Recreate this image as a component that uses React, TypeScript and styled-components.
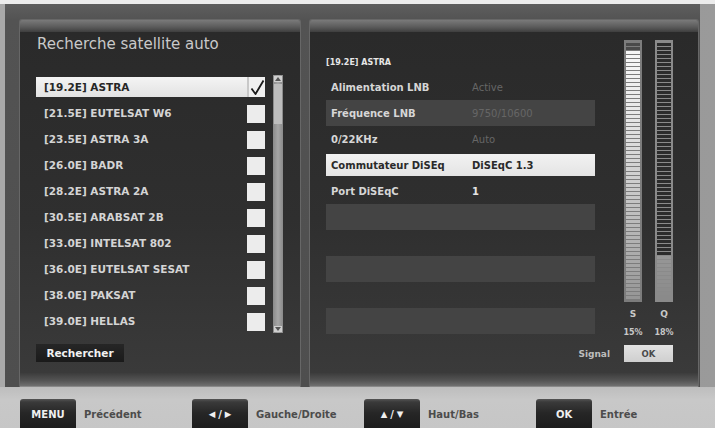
import React from "react";
import styled, { createGlobalStyle } from "styled-components";

const GlobalStyle = createGlobalStyle`
  html, body { margin: 0; padding: 0; background: #c4c4c4; }
  body { font-family: "DejaVu Sans", "Liberation Sans", sans-serif; }
  * { box-sizing: border-box; }
`;

const Screen = styled.div`
  width: 715px;
  height: 428px;
  overflow: hidden;
  display: flex;
  flex-direction: column;
  background: #c4c4c4;
`;

const TopStrip = styled.div`
  height: 4px;
  background: #ececec;
  flex: none;
`;

const Upper = styled.div`
  height: 383px;
  display: flex;
  background: linear-gradient(90deg, #a9a9a9 0px, #a9a9a9 5px, transparent 5px),
    linear-gradient(90deg, #8d8d8d, #9a9a9a);
  padding-left: 5px;
  flex: none;
`;

const Frame = styled.div`
  width: 695px;
  height: 100%;
  background: linear-gradient(180deg, #5e5e5e 0px, #535353 16px, #4e4e4e 100%);
  padding: 16px 2px 0 15px;
  display: flex;
  gap: 10px;
`;

const Panel = styled.div<{ $w: number }>`
  width: ${(p) => p.$w}px;
  height: 100%;
  display: flex;
  flex-direction: column;
  border-radius: 2px 2px 0 0;
  overflow: hidden;
  box-shadow: 0 0 0 1px #676767;
`;

const PanelTop = styled.div`
  height: 12px;
  flex: none;
  background: linear-gradient(180deg, #7a7a7a, #5a5a5a 60%, #3e3e3e);
`;

const PanelBody = styled.div`
  flex: 1;
  background: linear-gradient(180deg, #2a2a2a 0%, #2f2f2f 55%, #3a3a3a 100%);
  display: flex;
  flex-direction: column;
  padding-left: 16px;
`;

const PanelLip = styled.div`
  height: 14px;
  flex: none;
  background: linear-gradient(180deg, #3c3c3c, #555 60%, #707070);
  border-bottom: 1px solid #8a8a8a;
`;

const Title = styled.div`
  margin-top: 4px;
  height: 16px;
  line-height: 16px;
  font-size: 15px;
  color: #c9c9c9;
  padding-left: 1px;
`;

const ListArea = styled.div`
  margin-top: 22px;
  display: flex;
  gap: 8px;
  align-items: flex-start;
`;

const List = styled.div`
  width: 229px;
  display: flex;
  flex-direction: column;
`;

const ListRow = styled.div`
  height: 26px;
  padding: 3px 0;
  display: flex;
`;

const RowInner = styled.div<{ $sel?: boolean }>`
  flex: 1;
  display: flex;
  align-items: center;
  justify-content: space-between;
  background: ${(p) => (p.$sel ? "linear-gradient(180deg,#f4f4f4,#e2e2e2)" : "transparent")};
  padding-left: 8px;
`;

const ItemText = styled.span<{ $sel?: boolean }>`
  font-size: 10.5px;
  font-weight: bold;
  color: ${(p) => (p.$sel ? "#262626" : "#d4d4d4")};
  white-space: nowrap;
`;

const CheckBox = styled.div<{ $sel?: boolean }>`
  width: 18px;
  height: ${(p) => (p.$sel ? 20 : 18)}px;
  margin-top: ${(p) => (p.$sel ? 0 : 1)}px;
  background: ${(p) => (p.$sel ? "#f0f0f0" : "#ececec")};
  border-left: ${(p) => (p.$sel ? "2px solid #c8c8c8" : "none")};
  display: flex;
  align-items: center;
  justify-content: center;
`;

const ScrollTrack = styled.div`
  margin-top: 1px;
  width: 10px;
  height: 258px;
  background: linear-gradient(90deg, #8a8a8a, #a6a6a6 50%, #8a8a8a);
  display: flex;
  flex-direction: column;
  justify-content: space-between;
  align-items: center;
  padding: 1px 0;
`;

const ScrollCap = styled.div`
  width: 8px;
  height: 6px;
  background: #cfcfcf;
  display: flex;
  align-items: center;
  justify-content: center;
`;

const ScrollThumb = styled.div`
  width: 8px;
  height: 40px;
  background: #bdbdbd;
  margin-top: 2px;
`;

const ScrollSpacer = styled.div`
  flex: 1;
`;

const SearchButton = styled.div`
  margin-top: 10px;
  width: 88px;
  height: 18px;
  background: linear-gradient(180deg, #262626, #1a1a1a);
  color: #f2f2f2;
  font-size: 10.5px;
  font-weight: bold;
  display: flex;
  align-items: center;
  justify-content: center;
`;

const RightTop = styled.div`
  padding-top: 8px;
  padding-right: 25px;
  display: flex;
  justify-content: space-between;
  align-items: flex-start;
`;

const InfoColumn = styled.div`
  width: 269px;
  margin-top: 17px;
  display: flex;
  flex-direction: column;
`;

const InfoHeader = styled.div`
  height: 12px;
  line-height: 12px;
  font-size: 8px;
  font-weight: bold;
  color: #e6e6e6;
  margin-bottom: 5px;
`;

const InfoRow = styled.div<{ $tone: "dark" | "light" | "sel" }>`
  height: 26px;
  display: flex;
  align-items: center;
  padding-left: 5px;
  background: ${(p) =>
    p.$tone === "light"
      ? "#444444"
      : p.$tone === "sel"
      ? "linear-gradient(180deg, transparent 2px, #f2f2f2 2px, #e4e4e4 24px, transparent 24px)"
      : "transparent"};
`;

const InfoLabel = styled.span<{ $sel?: boolean }>`
  width: 141px;
  font-size: 10px;
  font-weight: bold;
  color: ${(p) => (p.$sel ? "#2a2a2a" : "#d6d6d6")};
  white-space: nowrap;
`;

const InfoValue = styled.span<{ $kind: "dim" | "on" | "sel" }>`
  font-size: 10px;
  font-weight: ${(p) => (p.$kind === "dim" ? "normal" : "bold")};
  color: ${(p) => (p.$kind === "dim" ? "#666666" : p.$kind === "sel" ? "#2a2a2a" : "#e4e4e4")};
  white-space: nowrap;
`;

const MeterColumn = styled.div`
  width: 49px;
  display: flex;
  flex-direction: column;
`;

const Bars = styled.div`
  display: flex;
  justify-content: space-between;
`;

const Bar = styled.div<{ $bg: string }>`
  width: 18px;
  height: 262px;
  background: ${(p) => p.$bg};
  padding: 3px 2px;
  display: flex;
  flex-direction: column;
  gap: 1px;
`;

const Segment = styled.div`
  flex: 1;
`;

const MeterText = styled.div<{ $size: number; $h: number }>`
  display: flex;
  justify-content: space-between;
  height: ${(p) => p.$h}px;
  align-items: center;
  font-size: ${(p) => p.$size}px;
  font-weight: bold;
  color: #c8c8c8;
`;

const MeterCell = styled.span`
  width: 18px;
  white-space: nowrap;
  display: flex;
  justify-content: center;
`;

const SignalRow = styled.div`
  margin-top: 7px;
  padding-right: 25px;
  display: flex;
  justify-content: flex-end;
  align-items: center;
  gap: 14px;
`;

const SignalLabel = styled.span`
  font-size: 9px;
  font-weight: bold;
  color: #bdbdbd;
`;

const SignalBox = styled.div`
  width: 49px;
  height: 17px;
  background: linear-gradient(180deg, #e2e2e2, #cfcfcf);
  color: #4a4a4a;
  font-size: 8.5px;
  font-weight: bold;
  display: flex;
  align-items: center;
  justify-content: center;
`;

const BottomBar = styled.div`
  flex: 1;
  background: linear-gradient(180deg, #bdbdbd, #c8c8c8 30%, #c6c6c6);
  padding: 12px 0 0 20px;
  display: grid;
  grid-template-columns: repeat(4, 172px);
`;

const KeyGroup = styled.div`
  display: flex;
  align-items: flex-start;
  gap: 8px;
`;

const KeyButton = styled.div`
  width: 56px;
  height: 30px;
  border-radius: 3px 3px 0 0;
  background: linear-gradient(180deg, #555 0px, #3a3a3a 3px, #262626 14px, #1c1c1c);
  color: #f0f0f0;
  font-size: 10px;
  font-weight: bold;
  display: flex;
  align-items: center;
  justify-content: center;
  gap: 3px;
`;

const KeyLabel = styled.span`
  height: 30px;
  display: flex;
  align-items: center;
  font-size: 10px;
  font-weight: bold;
  color: #4c4c4c;
  white-space: nowrap;
`;

const Tri = styled.span`
  font-size: 8.5px;
  font-family: "DejaVu Sans", sans-serif;
`;

const satellites = [
  "[19.2E] ASTRA",
  "[21.5E] EUTELSAT W6",
  "[23.5E] ASTRA 3A",
  "[26.0E] BADR",
  "[28.2E] ASTRA 2A",
  "[30.5E] ARABSAT 2B",
  "[33.0E] INTELSAT 802",
  "[36.0E] EUTELSAT SESAT",
  "[38.0E] PAKSAT",
  "[39.0E] HELLAS",
];

type Info = { label: string; value: string; kind: "dim" | "on" | "sel" } | null;

const infoRows: Info[] = [
  { label: "Alimentation LNB", value: "Active", kind: "dim" },
  { label: "Fréquence LNB", value: "9750/10600", kind: "dim" },
  { label: "0/22KHz", value: "Auto", kind: "dim" },
  { label: "Commutateur DiSEq", value: "DiSEqC 1.3", kind: "sel" },
  { label: "Port DiSEqC", value: "1", kind: "on" },
  null,
  null,
  null,
  null,
  null,
];

const SEG = 64;

function mix(a: number, b: number, t: number) {
  return Math.round(a + (b - a) * t);
}

function sColor(i: number) {
  if (i < 2) return "#4a4a4a";
  const t = (i - 2) / (SEG - 3);
  const v = mix(246, 150, Math.pow(t, 1.3));
  return `rgb(${v},${v},${v})`;
}

function qColor(i: number) {
  if (i < 53) return "#2c2c2c";
  const t = (i - 53) / (SEG - 54);
  const v = mix(150, 138, t);
  return `rgb(${v},${v},${v})`;
}

const Check = () => (
  <svg width="16" height="17" viewBox="0 0 16 17">
    <path d="M2.5 9.5 L6.5 15 L14.5 1.5" fill="none" stroke="#1a1a1a" strokeWidth="1.8" strokeLinejoin="round" />
  </svg>
);

const UpArrow = () => (
  <svg width="6" height="4" viewBox="0 0 6 4">
    <path d="M0 4 L3 0 L6 4 Z" fill="#555" />
  </svg>
);

const DownArrow = () => (
  <svg width="6" height="4" viewBox="0 0 6 4">
    <path d="M0 0 L3 4 L6 0 Z" fill="#555" />
  </svg>
);

export default function App() {
  const segs = Array.from({ length: SEG }, (_, i) => i);
  return (
    <>
      <GlobalStyle />
      <Screen>
        <TopStrip />
        <Upper>
          <Frame>
            <Panel $w={280}>
              <PanelTop />
              <PanelBody>
                <Title>Recherche satellite auto</Title>
                <ListArea>
                  <List>
                    {satellites.map((s, i) => (
                      <ListRow key={s}>
                        <RowInner $sel={i === 0}>
                          <ItemText $sel={i === 0}>{s}</ItemText>
                          <CheckBox $sel={i === 0}>{i === 0 && <Check />}</CheckBox>
                        </RowInner>
                      </ListRow>
                    ))}
                  </List>
                  <ScrollTrack>
                    <ScrollCap>
                      <UpArrow />
                    </ScrollCap>
                    <ScrollThumb />
                    <ScrollSpacer />
                    <ScrollCap>
                      <DownArrow />
                    </ScrollCap>
                  </ScrollTrack>
                </ListArea>
                <SearchButton>Rechercher</SearchButton>
              </PanelBody>
              <PanelLip />
            </Panel>
            <Panel $w={388}>
              <PanelTop />
              <PanelBody>
                <RightTop>
                  <InfoColumn>
                    <InfoHeader>[19.2E] ASTRA</InfoHeader>
                    {infoRows.map((r, i) => {
                      const tone = r && r.kind === "sel" ? "sel" : i % 2 === 1 ? "light" : "dark";
                      return (
                        <InfoRow key={i} $tone={tone}>
                          {r && (
                            <>
                              <InfoLabel $sel={r.kind === "sel"}>{r.label}</InfoLabel>
                              <InfoValue $kind={r.kind}>{r.value}</InfoValue>
                            </>
                          )}
                        </InfoRow>
                      );
                    })}
                  </InfoColumn>
                  <MeterColumn>
                    <Bars>
                      <Bar $bg="#7c7c7c">
                        {segs.map((i) => (
                          <Segment key={i} style={{ background: sColor(i) }} />
                        ))}
                      </Bar>
                      <Bar $bg="#8a8a8a">
                        {segs.map((i) => (
                          <Segment key={i} style={{ background: qColor(i) }} />
                        ))}
                      </Bar>
                    </Bars>
                    <MeterText $size={9} $h={24}>
                      <MeterCell>S</MeterCell>
                      <MeterCell>Q</MeterCell>
                    </MeterText>
                    <MeterText $size={8} $h={12}>
                      <MeterCell>15%</MeterCell>
                      <MeterCell>18%</MeterCell>
                    </MeterText>
                  </MeterColumn>
                </RightTop>
                <SignalRow>
                  <SignalLabel>Signal</SignalLabel>
                  <SignalBox>OK</SignalBox>
                </SignalRow>
              </PanelBody>
              <PanelLip />
            </Panel>
          </Frame>
        </Upper>
        <BottomBar>
          <KeyGroup>
            <KeyButton>MENU</KeyButton>
            <KeyLabel>Précédent</KeyLabel>
          </KeyGroup>
          <KeyGroup>
            <KeyButton>
              <Tri>◀</Tri>/<Tri>▶</Tri>
            </KeyButton>
            <KeyLabel>Gauche/Droite</KeyLabel>
          </KeyGroup>
          <KeyGroup>
            <KeyButton>
              <Tri>▲</Tri>/<Tri>▼</Tri>
            </KeyButton>
            <KeyLabel>Haut/Bas</KeyLabel>
          </KeyGroup>
          <KeyGroup>
            <KeyButton>OK</KeyButton>
            <KeyLabel>Entrée</KeyLabel>
          </KeyGroup>
        </BottomBar>
      </Screen>
    </>
  );
}
